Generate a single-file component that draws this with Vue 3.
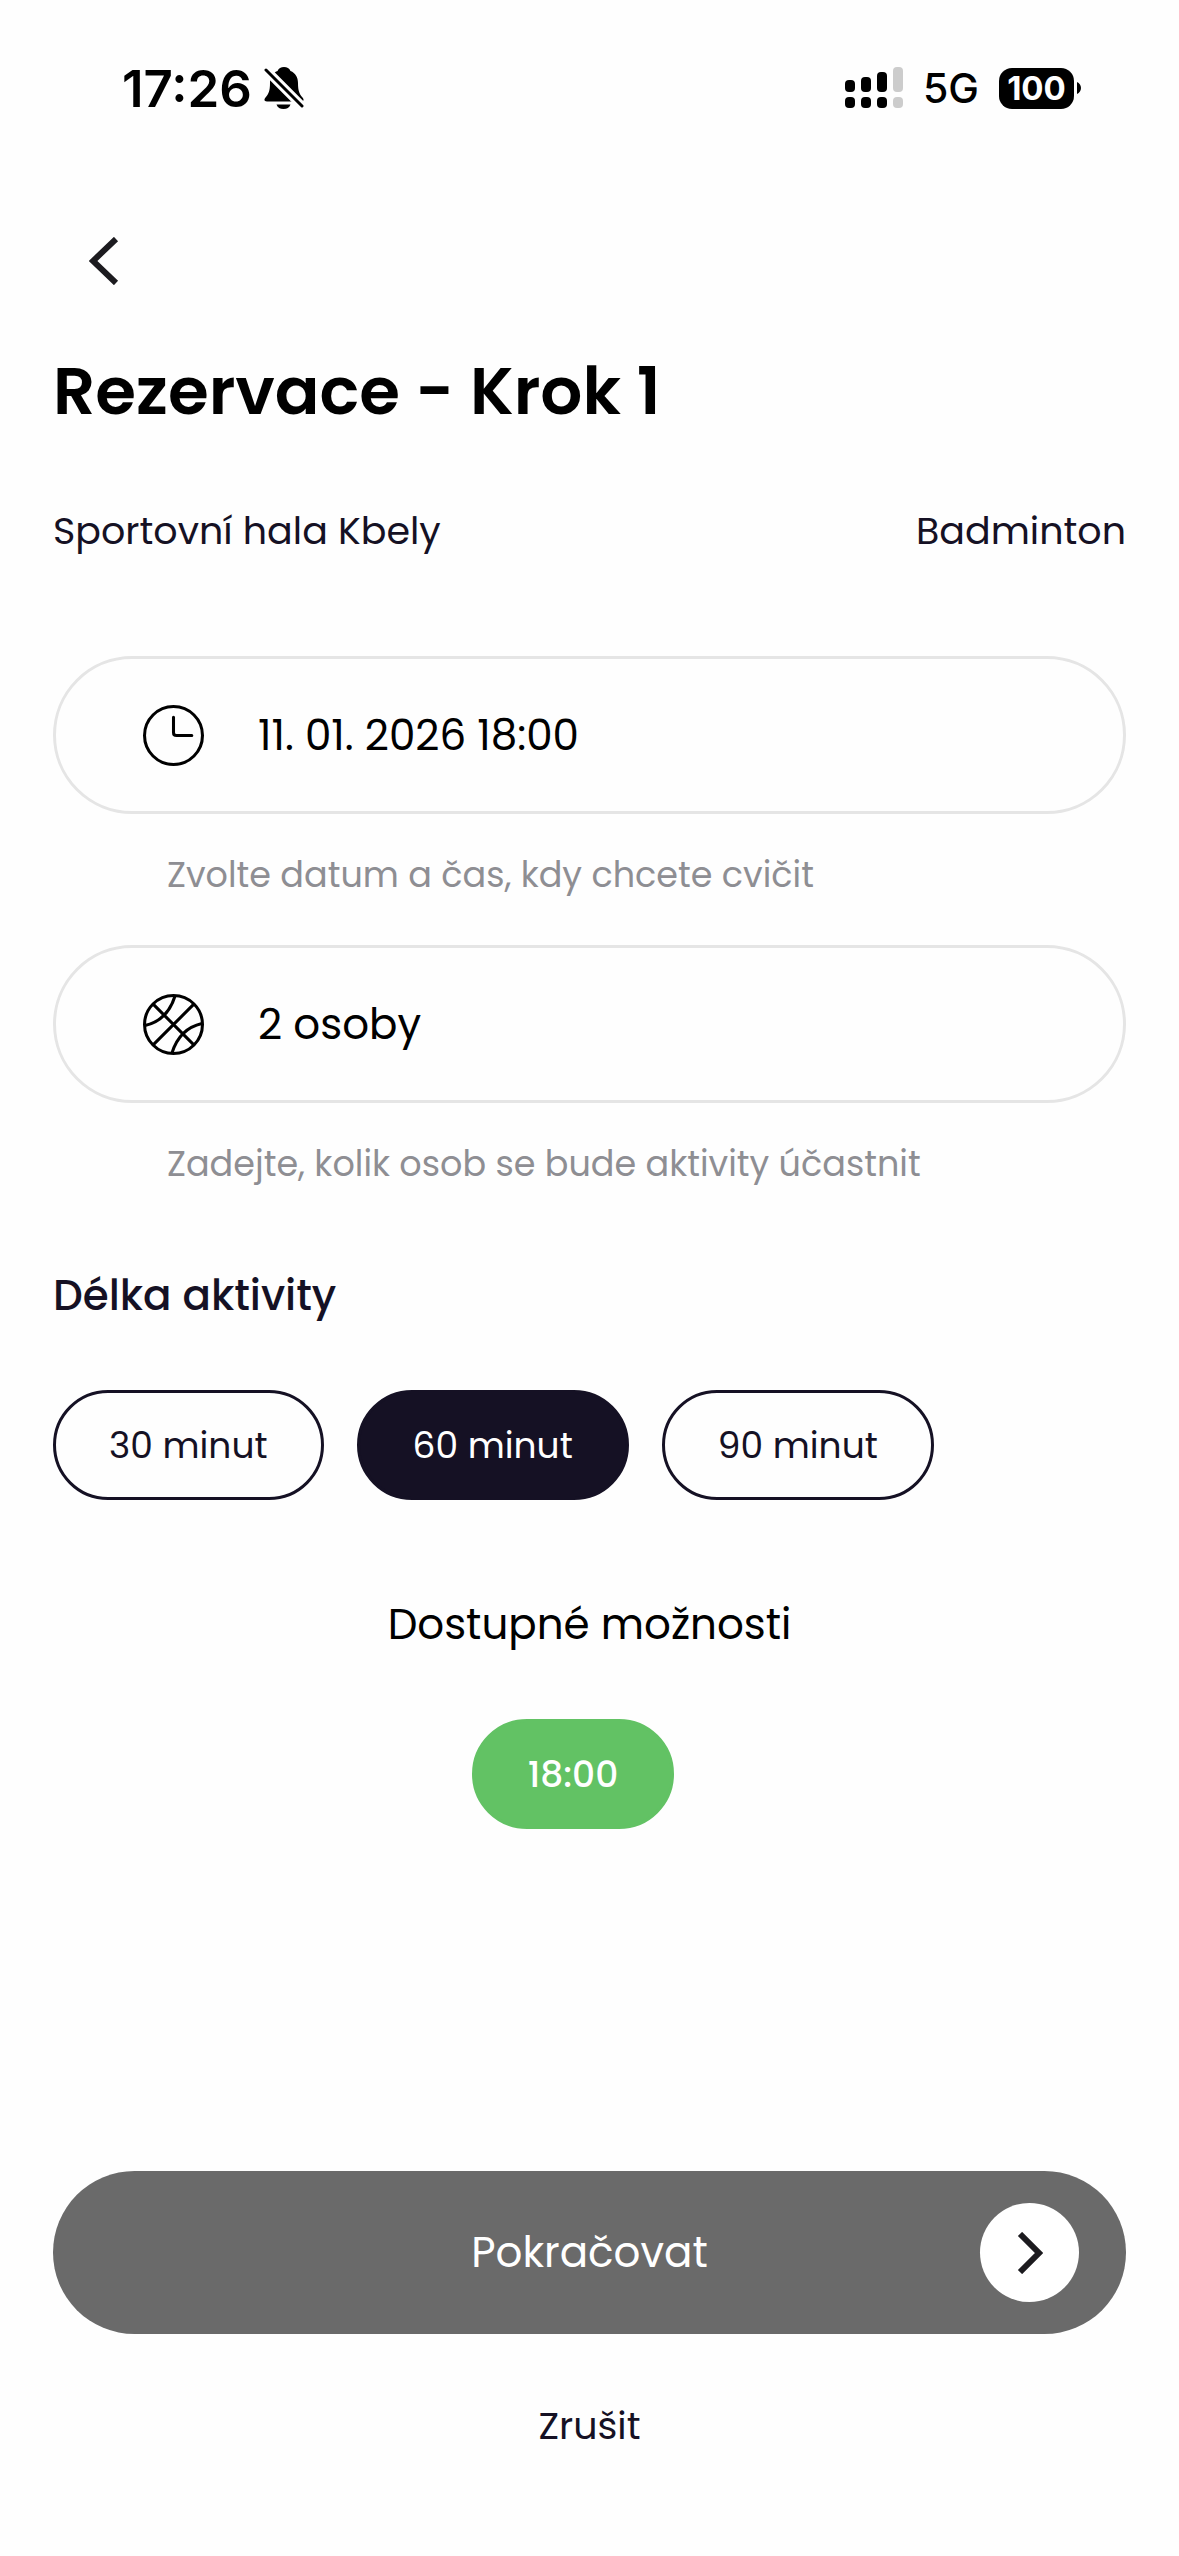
<script setup>
  import { ref } from 'vue';

  const dateTime = ref('11. 01. 2026 18:00');
  const persons = ref('2 osoby');

  const durations = [30, 60, 90];
  const selectedDuration = ref(60);

  const slots = ['18:00'];
</script>

<template>
  <div class="screen">
    <header class="status-bar">
      <div class="status-left">
        <span class="time">17:26</span>
        <svg class="bell" viewBox="0 0 40 44" aria-hidden="true">
          <path d="M20 1c-3 0-5.500 1.500-6.500 4-5 2-7.500 6.500-7.500 12 0 8-1.500 11-4.500 14.500C-.5 34 .5 35.500 3 35.500h34c2.500 0 3.500-1.500 1.500-4C35.500 28 34 25 34 17c0-5.500-2.500-10-7.500-12C25.500 2.500 23 1 20 1z" />
          <path d="M12.500 38.500h14c-1 3-3.500 4.500-7 4.500s-6-1.500-7-4.500z" />
          <path class="bell-gap" d="M2 4l37 37" />
          <path class="bell-slash" d="M2 4l36 36" />
        </svg>
      </div>
      <div class="status-right">
        <svg class="signal" viewBox="0 0 58 42" aria-hidden="true">
          <rect x="0" y="13" width="10" height="12" rx="4" />
          <rect x="16" y="10" width="10" height="15" rx="4" />
          <rect x="32" y="5" width="10" height="20" rx="4" />
          <rect class="off" x="48" y="0" width="10" height="25" rx="4" />
          <rect x="0" y="30" width="10" height="11" rx="4" />
          <rect x="16" y="30" width="10" height="11" rx="4" />
          <rect x="32" y="30" width="10" height="11" rx="4" />
          <rect class="off" x="48" y="30" width="10" height="11" rx="4" />
        </svg>
        <span class="network">5G</span>
        <div class="battery">
          <span class="level">100</span>
          <svg class="nub" viewBox="0 0 4 12" aria-hidden="true">
            <path d="M0 0c2.500 1 4 3.500 4 6s-1.500 5-4 6z" />
          </svg>
        </div>
      </div>
    </header>

    <main class="content">
      <button class="back" type="button" aria-label="Zpět">
        <svg viewBox="0 0 30 48" aria-hidden="true">
          <path d="M27 2L4 24l23 22" />
        </svg>
      </button>

      <h1 class="title">Rezervace - Krok 1</h1>

      <div class="summary">
        <span>Sportovní hala Kbely</span>
        <span>Badminton</span>
      </div>

      <div class="field">
        <div class="input-box">
          <svg class="field-icon" viewBox="0 0 60 60" aria-hidden="true">
            <circle cx="30" cy="30" r="28.500" />
            <path d="M30 12v15q0 3 3 3h15" stroke-linecap="round" />
          </svg>
          <input id="date-time" v-model="dateTime" type="text" readonly />
        </div>
        <label class="hint" for="date-time">Zvolte datum a čas, kdy chcete cvičit</label>
      </div>

      <div class="field">
        <div class="input-box">
          <svg class="field-icon" viewBox="0 0 60 60" aria-hidden="true">
            <circle cx="30" cy="30" r="28.500" />
            <path d="M10 10l40 40M50 10L10 50" />
            <path d="M31.500 2Q24 26 2 31" />
            <path d="M28.500 58Q36 34 58 29" />
          </svg>
          <input id="persons" v-model="persons" type="text" readonly />
        </div>
        <label class="hint" for="persons">Zadejte, kolik osob se bude aktivity účastnit</label>
      </div>

      <h2 class="section-title">Délka aktivity</h2>
      <div class="durations">
        <button
          v-for="minutes in durations"
          :key="minutes"
          class="pill"
          :class="{ selected: minutes === selectedDuration }"
          type="button"
          :aria-pressed="minutes === selectedDuration"
          @click="selectedDuration = minutes"
        >
          {{ minutes }} minut
        </button>
      </div>

      <h2 class="options-title">Dostupné možnosti</h2>
      <div class="slots">
        <button v-for="slot in slots" :key="slot" class="pill slot" type="button">{{ slot }}</button>
      </div>
    </main>

    <footer class="actions">
      <button class="continue" type="button">
        <span class="continue-label">Pokračovat</span>
        <span class="continue-icon">
          <svg viewBox="0 0 26 42" aria-hidden="true">
            <path d="M3 2l19 19L3 40" />
          </svg>
        </span>
      </button>
      <button class="cancel" type="button">Zrušit</button>
    </footer>
  </div>
</template>

<style>
body {
  background: #fefefe;
}
</style>

<style scoped>
.screen {
  box-sizing: border-box;
  min-height: 100vh;
  padding: 60px 53px 106px;
  display: flex;
  flex-direction: column;
  font-family: Poppins, Inter, sans-serif;
  color: #000;
}
button {
  padding: 0;
  border: none;
  background: none;
  font-family: inherit;
  color: inherit;
  cursor: pointer;
}

/* Status bar */
.status-bar {
  display: flex;
  justify-content: space-between;
  align-items: center;
  height: 56px;
  padding: 0 45px 0 69px;
  font-family: Inter, sans-serif;
}
.status-left,
.status-right {
  display: flex;
  align-items: center;
}
.status-left {
  gap: 12px;
}
.status-right {
  gap: 20px;
}
.time {
  font-size: 51px;
  font-weight: 600;
}
.bell {
  width: 40px;
  height: 44px;
}
.bell-gap,
.bell-slash {
  fill: none;
  stroke: #000;
  stroke-width: 3;
  stroke-linecap: round;
}
.bell-gap {
  stroke: #fefefe;
  stroke-width: 9;
}
.signal {
  width: 58px;
  height: 42px;
}
.off {
  fill: #ccc;
}
.network {
  font-size: 41px;
  font-weight: 500;
}
.battery {
  display: flex;
  align-items: center;
  gap: 3px;
}
.level {
  width: 75px;
  border-radius: 13px;
  background: #000;
  color: #fff;
  font-size: 33px;
  font-weight: 700;
  line-height: 41px;
  text-align: center;
}
.nub {
  width: 4px;
  height: 12px;
}

/* Form */
.content {
  display: flex;
  flex-direction: column;
}
.back {
  align-self: flex-start;
  display: flex;
  align-items: center;
  justify-content: center;
  width: 102px;
  height: 80px;
  margin-top: 105px;
}
.back svg {
  width: 30px;
  height: 48px;
}
.back path,
.continue-icon path {
  fill: none;
  stroke: #1c1b1f;
  stroke-width: 6;
}
.title {
  margin: 50px 0 0;
  font-size: 66px;
  font-weight: 600;
  line-height: 80px;
}
.summary {
  display: flex;
  justify-content: space-between;
  margin: 76px 0 101px;
  color: #151124;
  font-size: 38px;
  line-height: 48px;
}
.field {
  display: flex;
  flex-direction: column;
  gap: 39px;
  margin-bottom: 48px;
}
.input-box {
  display: flex;
  align-items: center;
  gap: 54px;
  box-sizing: border-box;
  height: 158px;
  padding: 0 87px;
  border: 3px solid #e5e5e5;
  border-radius: 79px;
}
.field-icon {
  flex: none;
  width: 61px;
  height: 61px;
  fill: none;
  stroke: #000;
  stroke-width: 3;
}
.input-box input {
  flex: 1;
  min-width: 0;
  padding: 0;
  border: none;
  outline: none;
  background: none;
  color: #000;
  font-family: inherit;
  font-size: 42px;
}
.hint {
  padding-left: 114px;
  color: #8e8e93;
  font-size: 35px;
  line-height: 44px;
}
.section-title,
.options-title {
  font-size: 42px;
  line-height: 56px;
}
.section-title {
  margin: 34px 0 66px;
  color: #151124;
  font-weight: 500;
}
.durations,
.slots {
  display: flex;
  flex-wrap: wrap;
  gap: 33px;
}
.pill {
  box-sizing: border-box;
  height: 110px;
  padding: 0 53px;
  border: 3px solid #151124;
  border-radius: 55px;
  color: #151124;
  font-size: 36px;
}
.pill.selected {
  background: #151124;
  color: #fff;
}
.options-title {
  margin: 97px 0 66px;
  font-weight: 400;
  text-align: center;
}
.slots {
  justify-content: center;
  padding-right: 33px;
}
.pill.slot {
  border-color: #62c264;
  background: #62c264;
  color: #fff;
  font-weight: 500;
}

/* Bottom actions */
.actions {
  display: flex;
  flex-direction: column;
  align-items: center;
  gap: 68px;
  margin-top: auto;
}
.continue {
  display: grid;
  grid-template-columns: 99px 1fr 99px;
  align-items: center;
  width: 100%;
  height: 163px;
  padding: 0 47px;
  border-radius: 82px;
  background: #6a6a6a;
  color: #fff;
  font-size: 42px;
}
.continue-label {
  grid-column: 2;
}
.continue-icon {
  display: flex;
  align-items: center;
  justify-content: center;
  height: 99px;
  border-radius: 50%;
  background: #fff;
}
.continue-icon svg {
  width: 26px;
  height: 42px;
}
.cancel {
  color: #151124;
  font-size: 38px;
  line-height: 48px;
}
</style>
